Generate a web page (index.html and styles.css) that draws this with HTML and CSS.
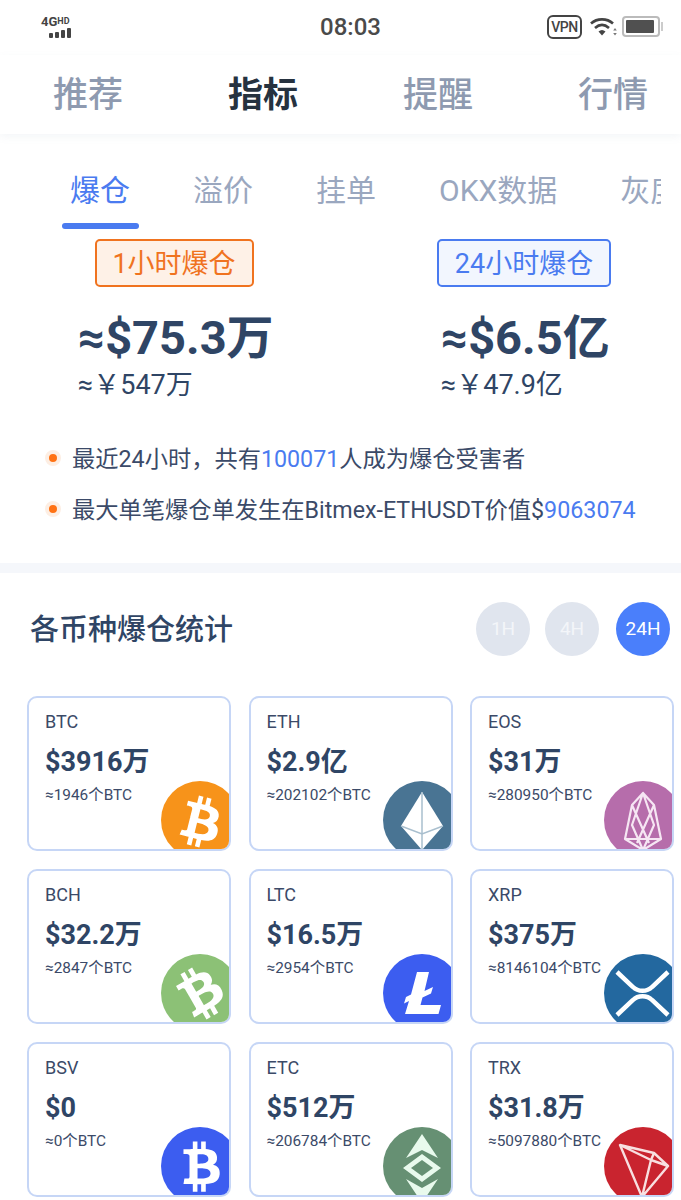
FILE: index.html
```html
<!DOCTYPE html>
<html lang="zh-CN">
<head>
    <meta charset="UTF-8">
    <meta name="viewport" content="width=device-width, initial-scale=1.0">
    <title>指标</title>
    <link rel="stylesheet" href="styles.css">
</head>
<body>

<div class="status-bar">
    <div class="signal">
        <div class="signal-text">4G<span>HD</span></div>
        <div class="signal-bars"><i></i><i></i><i></i><i></i></div>
    </div>
    <div class="clock">08:03</div>
    <div class="status-right">
        <span class="vpn">VPN</span>
        <svg class="wifi" width="27" height="20" viewBox="0 0 27 20">
            <path d="M1 6.5C7 1 17 1 23 6.5" fill="none" stroke="#444" stroke-width="2.6"/>
            <path d="M5 11C9.500 7 14.500 7 19 11" fill="none" stroke="#444" stroke-width="2.600"/>
            <path d="M8.500 14.500C10.800 12.500 13.200 12.500 15.500 14.500L12 18.500Z" fill="#444"/>
            <path d="M25 11l1.800 2.500h-3.600zM25 18.500l-1.800-2.500h3.600z" fill="#777"/>
        </svg>
        <div class="battery"><div class="battery-fill"></div></div>
    </div>
</div>

<div class="main-nav">
    <div class="main-nav-item">推荐</div>
    <div class="main-nav-item active">指标</div>
    <div class="main-nav-item">提醒</div>
    <div class="main-nav-item">行情</div>
</div>

<div class="tabs">
    <div class="tab active">爆仓</div>
    <div class="tab">溢价</div>
    <div class="tab">挂单</div>
    <div class="tab">OKX数据</div>
    <div class="tab">灰度</div>
</div>

<div class="stats">
    <div class="stat stat-hour">
        <div class="badge badge-orange">1小时爆仓</div>
        <div class="stat-body">
            <div class="stat-value">≈$75.3万</div>
            <div class="stat-sub">≈￥547万</div>
        </div>
    </div>
    <div class="stat stat-day">
        <div class="badge badge-blue">24小时爆仓</div>
        <div class="stat-body">
            <div class="stat-value">≈$6.5亿</div>
            <div class="stat-sub">≈￥47.9亿</div>
        </div>
    </div>
</div>

<div class="notes">
    <div class="note"><span class="dot"></span>最近24小时，共有<span class="num">100071</span>人成为爆仓受害者</div>
    <div class="note"><span class="dot"></span>最大单笔爆仓单发生在Bitmex-ETHUSDT价值$<span class="num">9063074</span></div>
</div>

<div class="divider"></div>

<div class="section-head">
    <h2>各币种爆仓统计</h2>
    <div class="pills">
        <div class="pill">1H</div>
        <div class="pill">4H</div>
        <div class="pill active">24H</div>
    </div>
</div>

<div class="cards">
    <div class="card">
        <div class="card-name">BTC</div>
        <div class="card-value">$3916万</div>
        <div class="card-sub">≈1946个BTC</div>
        <svg class="coin" viewBox="0 0 78 78">
            <circle cx="39" cy="39" r="39" fill="#f7931a"/>
            <path transform="translate(-2.600 -1) scale(2.6)" fill="#fff" d="M23.189 14.02c.314-2.096-1.283-3.223-3.465-3.975l.708-2.84-1.728-.43-.69 2.765c-.454-.114-.92-.22-1.385-.326l.695-2.783L15.596 6l-.708 2.839c-.376-.086-.746-.17-1.104-.26l.002-.009-2.384-.595-.46 1.846s1.283.294 1.256.312c.7.175.826.638.805 1.006l-.806 3.235c.048.012.11.03.18.057l-.183-.045-1.13 4.532c-.086.212-.303.531-.793.41.018.025-1.256-.313-1.256-.313l-.858 1.978 2.25.561c.418.105.828.215 1.231.318l-.715 2.872 1.727.43.708-2.84c.472.127.93.245 1.378.357l-.706 2.828 1.728.43.715-2.866c2.948.558 5.164.333 6.097-2.333.752-2.146-.037-3.385-1.588-4.192 1.13-.26 1.98-1.003 2.207-2.538zm-3.95 5.538c-.533 2.147-4.148.986-5.32.695l.95-3.805c1.172.293 4.929.872 4.37 3.11zm.535-5.569c-.487 1.953-3.495.96-4.47.717l.86-3.45c.975.243 4.118.696 3.61 2.733z"/>
        </svg>
    </div>
    <div class="card">
        <div class="card-name">ETH</div>
        <div class="card-value">$2.9亿</div>
        <div class="card-sub">≈202102个BTC</div>
        <svg class="coin" viewBox="0 0 78 78">
            <circle cx="39" cy="39" r="39" fill="#497493"/>
            <path d="M39 11L60 45L39 69L18 45Z" fill="#fff"/>
            <path d="M39 11V69M18 45L39 53L60 45" fill="none" stroke="#a9bfce" stroke-width="1.500"/>
        </svg>
    </div>
    <div class="card">
        <div class="card-name">EOS</div>
        <div class="card-value">$31万</div>
        <div class="card-sub">≈280950个BTC</div>
        <svg class="coin" viewBox="0 0 78 78">
            <circle cx="39" cy="39" r="39" fill="#b66dab"/>
            <path d="M39 12L50 24L57 58L39 69L21 58L28 24ZM39 12L28 44L39 69L50 44ZM28 24L45 62M50 24L33 62M21 58H57" fill="none" stroke="#f6e6f3" stroke-width="2.200" stroke-linejoin="round"/>
        </svg>
    </div>

    <div class="card">
        <div class="card-name">BCH</div>
        <div class="card-value">$32.2万</div>
        <div class="card-sub">≈2847个BTC</div>
        <svg class="coin" viewBox="0 0 78 78">
            <circle cx="39" cy="39" r="39" fill="#8cc176"/>
            <path transform="rotate(-44 39 39) translate(-4.200 -4.200) scale(2.7)" fill="#fff" d="M23.189 14.02c.314-2.096-1.283-3.223-3.465-3.975l.708-2.84-1.728-.43-.69 2.765c-.454-.114-.92-.22-1.385-.326l.695-2.783L15.596 6l-.708 2.839c-.376-.086-.746-.17-1.104-.26l.002-.009-2.384-.595-.46 1.846s1.283.294 1.256.312c.7.175.826.638.805 1.006l-.806 3.235c.048.012.11.03.18.057l-.183-.045-1.13 4.532c-.086.212-.303.531-.793.41.018.025-1.256-.313-1.256-.313l-.858 1.978 2.25.561c.418.105.828.215 1.231.318l-.715 2.872 1.727.43.708-2.84c.472.127.93.245 1.378.357l-.706 2.828 1.728.43.715-2.866c2.948.558 5.164.333 6.097-2.333.752-2.146-.037-3.385-1.588-4.192 1.13-.26 1.98-1.003 2.207-2.538zm-3.95 5.538c-.533 2.147-4.148.986-5.32.695l.95-3.805c1.172.293 4.929.872 4.37 3.11zm.535-5.569c-.487 1.953-3.495.96-4.47.717l.86-3.45c.975.243 4.118.696 3.61 2.733z"/>
        </svg>
    </div>
    <div class="card">
        <div class="card-name">LTC</div>
        <div class="card-value">$16.5万</div>
        <div class="card-sub">≈2954个BTC</div>
        <svg class="coin" viewBox="0 0 78 78">
            <circle cx="39" cy="39" r="39" fill="#3c5df0"/>
            <path d="M34 18H46L41.500 37L50 33L48 39.500L39.500 43.500L37.500 51H58L55.500 60H22L26 47L21 49.500L23 43L28 40.500Z" fill="#fff"/>
        </svg>
    </div>
    <div class="card">
        <div class="card-name">XRP</div>
        <div class="card-value">$375万</div>
        <div class="card-sub">≈8146104个BTC</div>
        <svg class="coin" viewBox="0 0 78 78">
            <circle cx="39" cy="39" r="39" fill="#23689f"/>
            <path d="M13 18L29 33C34 38 43 38 48 33L64 18M13 61L29 46C34 41 43 41 48 46L64 61" fill="none" stroke="#fff" stroke-width="4.500"/>
        </svg>
    </div>

    <div class="card">
        <div class="card-name">BSV</div>
        <div class="card-value">$0</div>
        <div class="card-sub">≈0个BTC</div>
        <svg class="coin" viewBox="0 0 78 78">
            <circle cx="39" cy="39" r="39" fill="#3c5df0"/>
            <path transform="rotate(-14 39 39) translate(-2.600 -2.100) scale(2.6)" fill="#fff" d="M23.189 14.02c.314-2.096-1.283-3.223-3.465-3.975l.708-2.84-1.728-.43-.69 2.765c-.454-.114-.92-.22-1.385-.326l.695-2.783L15.596 6l-.708 2.839c-.376-.086-.746-.17-1.104-.26l.002-.009-2.384-.595-.46 1.846s1.283.294 1.256.312c.7.175.826.638.805 1.006l-.806 3.235c.048.012.11.03.18.057l-.183-.045-1.13 4.532c-.086.212-.303.531-.793.41.018.025-1.256-.313-1.256-.313l-.858 1.978 2.25.561c.418.105.828.215 1.231.318l-.715 2.872 1.727.43.708-2.84c.472.127.93.245 1.378.357l-.706 2.828 1.728.43.715-2.866c2.948.558 5.164.333 6.097-2.333.752-2.146-.037-3.385-1.588-4.192 1.13-.26 1.98-1.003 2.207-2.538zm-3.95 5.538c-.533 2.147-4.148.986-5.32.695l.95-3.805c1.172.293 4.929.872 4.37 3.11zm.535-5.569c-.487 1.953-3.495.96-4.47.717l.86-3.45c.975.243 4.118.696 3.61 2.733z"/>
        </svg>
    </div>
    <div class="card">
        <div class="card-name">ETC</div>
        <div class="card-value">$512万</div>
        <div class="card-sub">≈206784个BTC</div>
        <svg class="coin" viewBox="0 0 78 78">
            <circle cx="39" cy="39" r="39" fill="#669073"/>
            <path d="M39 7L55 31L39 23L23 31Z" fill="#e9faed"/>
            <path fill-rule="evenodd" d="M39 27L58 41L39 55L20 41ZM39 33L50 41L39 49L28 41Z" fill="#e9faed"/>
            <path d="M23 52L39 61L55 52L39 76Z" fill="#e9faed"/>
        </svg>
    </div>
    <div class="card">
        <div class="card-name">TRX</div>
        <div class="card-value">$31.8万</div>
        <div class="card-sub">≈5097880个BTC</div>
        <svg class="coin" viewBox="0 0 78 78">
            <circle cx="39" cy="39" r="39" fill="#c9242f"/>
            <path d="M16 18L50 26L64 39L38 70ZM16 18L47 33L38 70M47 33L50 26M47 33L64 39" fill="none" stroke="#f8dfe0" stroke-width="2.400" stroke-linejoin="round"/>
        </svg>
    </div>
</div>

</body>
</html>
```

FILE: styles.css
```css
* {
    box-sizing: border-box;
}
html, body {
    overflow: hidden;
}
body {
    font-family: Roboto, "Noto Sans CJK SC", sans-serif;
    margin: 0;
    padding: 0;
    height: 1200px;
    background-color: white;
    color: #2f4565;
}

/* status bar */
.status-bar {
    display: grid;
    grid-template-columns: 1fr auto 1fr;
    align-items: center;
    height: 55px;
    padding: 0 19px 2px 41px;
}
.signal {
    width: 31px;
}
.signal-text {
    font-size: 13px;
    font-weight: 700;
    line-height: 11px;
    color: #444;
    white-space: nowrap;
}
.signal-text span {
    font-size: 9px;
    vertical-align: 2px;
}
.signal-bars {
    display: flex;
    align-items: flex-end;
    justify-content: flex-end;
    gap: 2px;
    height: 10px;
    margin-top: 1px;
    padding-right: 1px;
}
.signal-bars i {
    width: 4px;
    background-color: #444;
    border-radius: 1px;
}
.signal-bars i:nth-child(1) { height: 5px; }
.signal-bars i:nth-child(2) { height: 6px; }
.signal-bars i:nth-child(3) { height: 8px; }
.signal-bars i:nth-child(4) { height: 10px; }
.clock {
    font-size: 24px;
    font-weight: 500;
    color: #4a4a4a;
    margin-right: 2px;
}
.status-right {
    display: flex;
    align-items: center;
    justify-content: flex-end;
    gap: 5px;
}
.vpn {
    border: 2px solid #444;
    border-radius: 6px;
    font-size: 14px;
    font-weight: 500;
    line-height: 20px;
    height: 24px;
    width: 35px;
    margin-right: 3px;
    text-align: center;
    letter-spacing: -0.5px;
    color: #444;
}
.battery {
    width: 38px;
    height: 21px;
    border: 2px solid #bbb;
    border-radius: 4px;
    padding: 2px;
    margin-right: 2px;
    position: relative;
}
.battery::after {
    content: "";
    position: absolute;
    right: -5px;
    top: 4px;
    width: 2px;
    height: 9px;
    background-color: #ccc;
}
.battery-fill {
    width: 28px;
    height: 100%;
    background-color: #505050;
    border-radius: 1px;
}

/* top nav */
.main-nav {
    display: flex;
    gap: 105px;
    height: 79px;
    padding: 17px 0 0 53px;
    box-shadow: 0 3px 8px rgba(120, 135, 170, 0.08);
    position: relative;
}
.main-nav-item {
    font-size: 35px;
    line-height: 48px;
    font-weight: 500;
    color: #8e9ab0;
    white-space: nowrap;
}
.main-nav-item.active {
    color: #26323f;
    font-weight: 700;
}

/* sub tabs */
.tabs {
    display: flex;
    gap: 63px;
    height: 105px;
    width: 661px;
    padding: 36px 0 0 70px;
    overflow: hidden;
}
.tab {
    font-size: 30px;
    line-height: 42px;
    color: #9aa7bf;
    white-space: nowrap;
    position: relative;
}
.tab.active {
    color: #4a7bf0;
}
.tab.active::after {
    content: "";
    position: absolute;
    left: -8px;
    right: -9px;
    top: 53px;
    height: 6px;
    border-radius: 3px;
    background-color: #4a7bf0;
}

/* 1h / 24h stats */
.stats {
    display: flex;
    gap: 167px;
    padding-left: 78px;
}
.stat {
    display: flex;
    flex-direction: column;
    align-items: center;
}
.stat-hour {
    width: 192px;
}
.stat-day {
    width: 174px;
}
.badge {
    height: 48px;
    border: 2px solid;
    border-radius: 5px;
    font-size: 27px;
    line-height: 46px;
    text-align: center;
    white-space: nowrap;
}
.badge-orange {
    width: 159px;
    color: #f0731f;
    background-color: #fef1e7;
}
.badge-blue {
    width: 174px;
    color: #4a7bf0;
    background-color: #f2f6fe;
}
.stat-body {
    align-self: stretch;
}
.stat-day .stat-body {
    padding-left: 4px;
}
.stat-value {
    font-size: 47px;
    font-weight: 700;
    line-height: 52px;
    margin-top: 25px;
    white-space: nowrap;
}
.stat-sub {
    font-size: 27px;
    line-height: 36px;
    margin-top: 3px;
    white-space: nowrap;
}

/* notes */
.notes {
    padding: 39px 0 0 45px;
}
.note {
    display: flex;
    align-items: center;
    font-size: 23.25px;
    line-height: 34px;
    margin-bottom: 17px;
    color: #3b4a68;
    white-space: nowrap;
}
.dot {
    width: 16px;
    height: 16px;
    border-radius: 50%;
    background-color: #ff7214;
    border: 4px solid #fdeee3;
    margin-right: 11px;
    margin-top: -3px;
}
.num {
    color: #4a7bf0;
}

.divider {
    height: 10px;
    margin-top: 36px;
    background-color: #f5f7fb;
}

/* per coin section */
.section-head {
    display: flex;
    align-items: center;
    justify-content: space-between;
    padding: 29px 11px 0 30px;
}
.section-head h2 {
    margin: 0 0 4px;
    font-size: 29px;
    font-weight: 500;
    color: #2f4565;
}
.pills {
    display: flex;
    gap: 15px;
}
.pills .pill:last-child {
    margin-left: 2px;
}
.pill {
    width: 54px;
    height: 54px;
    border-radius: 50%;
    background-color: #e0e5ee;
    color: #f3f5f9;
    font-size: 19px;
    line-height: 54px;
    text-align: center;
}
.pill.active {
    background-color: #4a7ffb;
    color: white;
}

.cards {
    display: grid;
    grid-template-columns: repeat(3, 204px);
    grid-auto-rows: 155px;
    column-gap: 17.5px;
    row-gap: 18px;
    padding: 40px 0 0 27px;
}
.card {
    position: relative;
    overflow: hidden;
    border: 2px solid #c6d6f6;
    border-radius: 10px;
    padding: 13px 0 0 16px;
    background-color: white;
}
.card-name {
    font-size: 18px;
    line-height: 22px;
    color: #3b4a68;
}
.card-value {
    font-size: 27px;
    font-weight: 700;
    line-height: 34px;
    margin-top: 12px;
    white-space: nowrap;
}
.card-sub {
    font-size: 15.4px;
    line-height: 20px;
    margin-top: 6px;
    color: #3b4a68;
    white-space: nowrap;
}
.coin {
    position: absolute;
    left: 132px;
    top: 83px;
    width: 78px;
    height: 78px;
}
```
